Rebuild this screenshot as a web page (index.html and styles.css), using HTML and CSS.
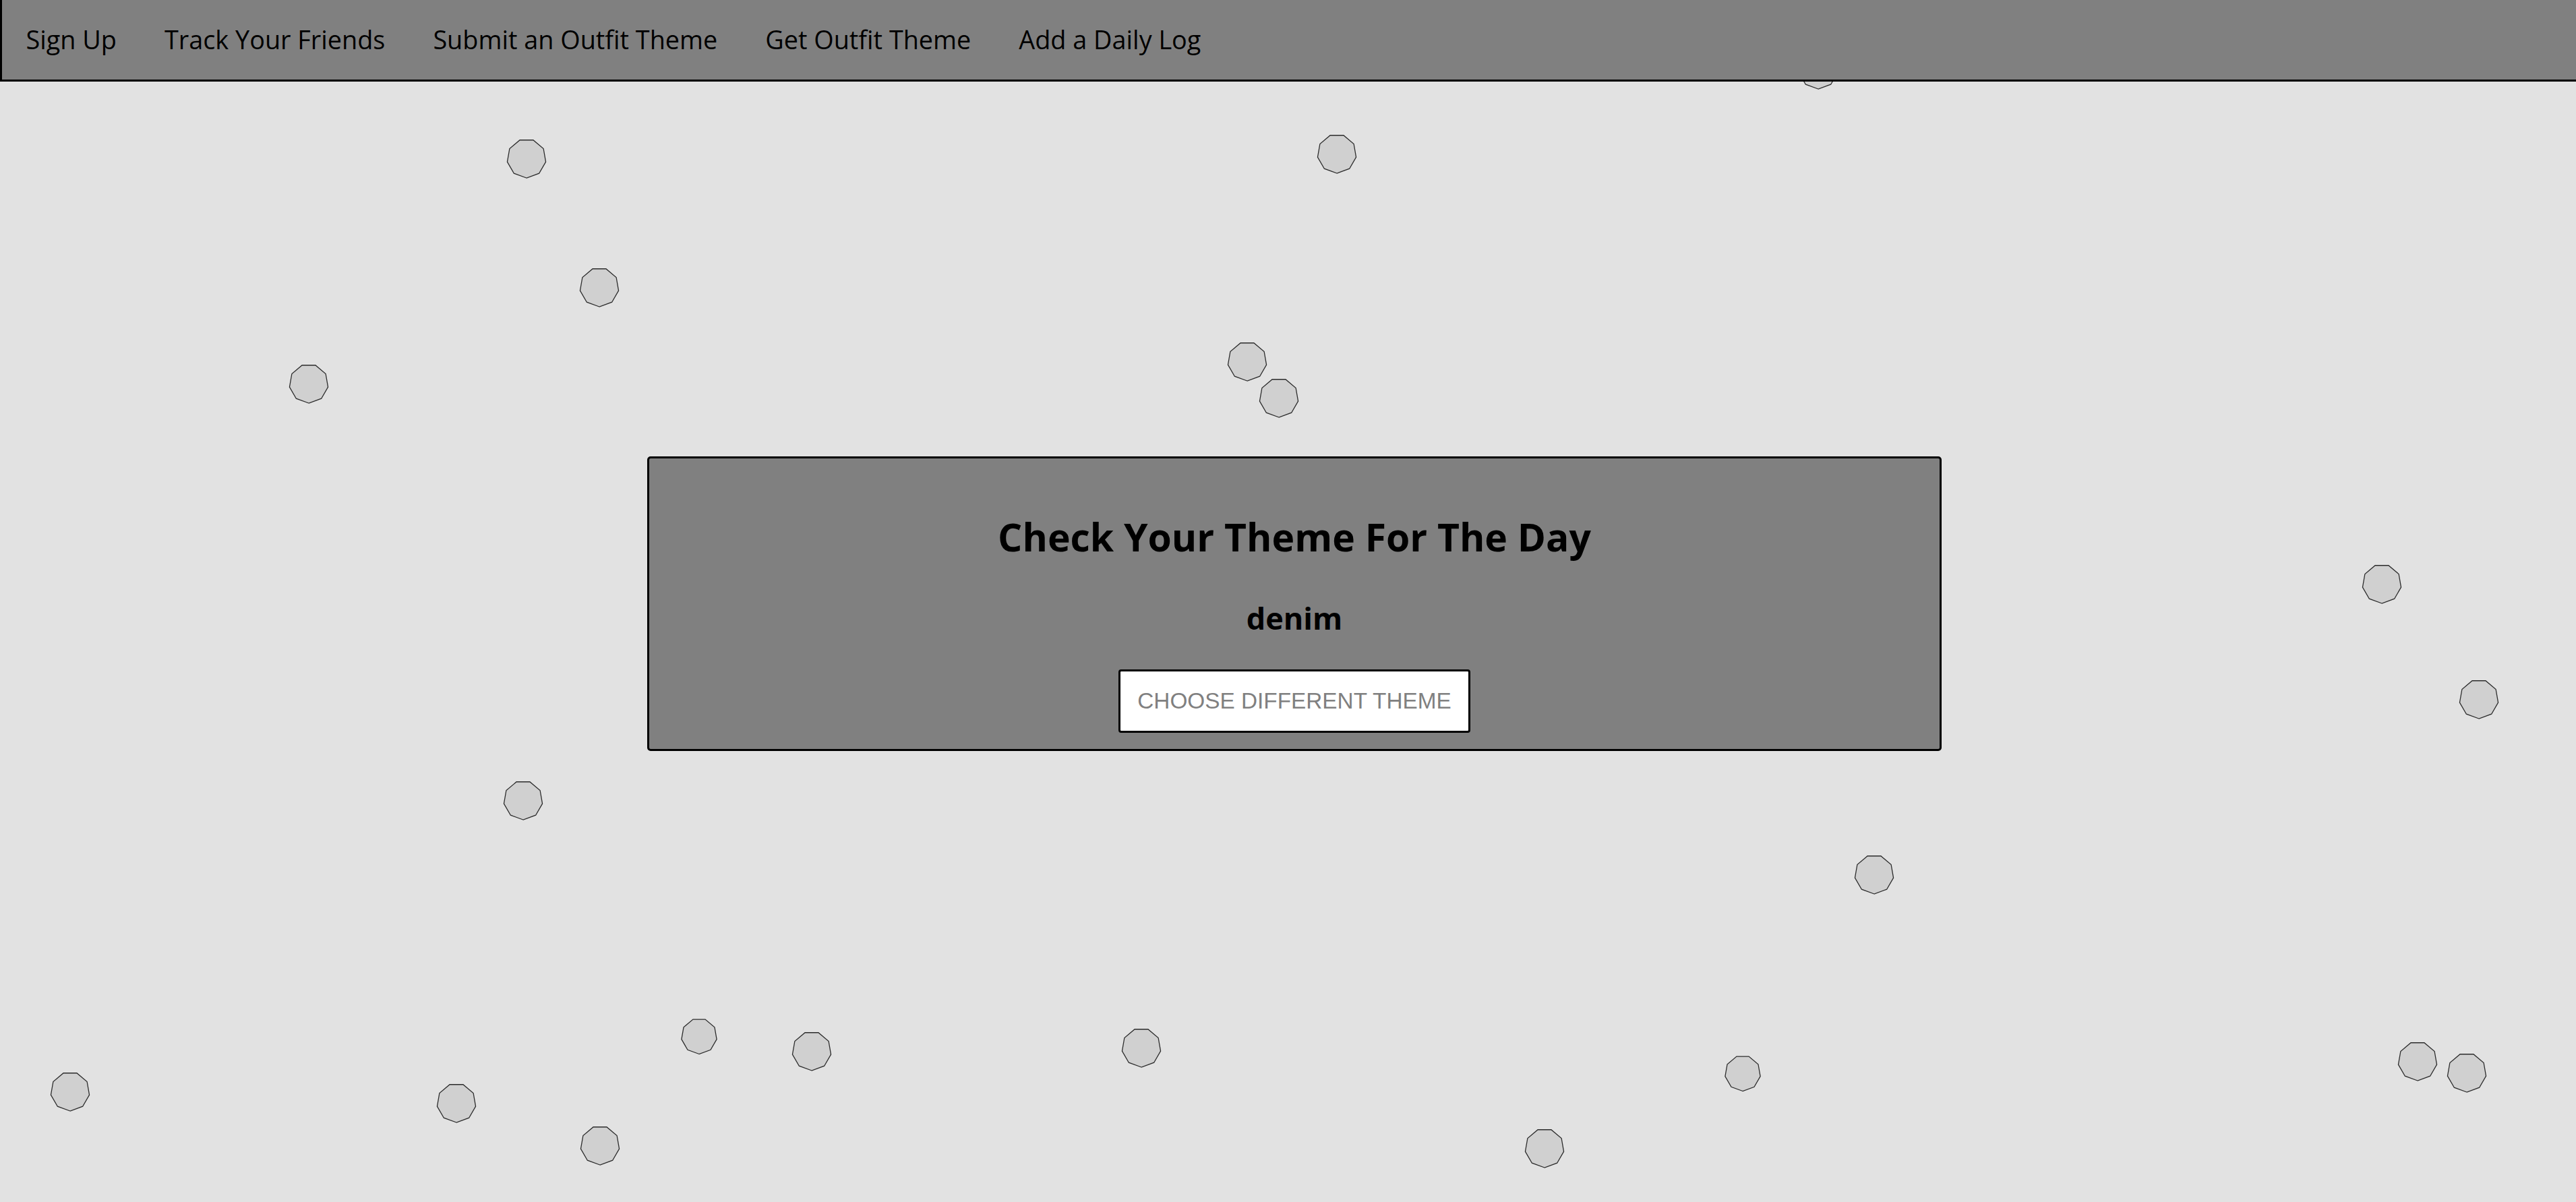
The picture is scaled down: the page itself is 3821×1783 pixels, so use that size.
FILE: index.html
```html
<!DOCTYPE html>
<html lang="en">
<head>
<meta charset="utf-8">
<title>Get Outfit Theme</title>
<link rel="stylesheet" href="styles.css">
</head>
<body>
<svg class="particles" width="3821" height="1783" viewBox="0 0 3821 1783" aria-hidden="true">
  <defs>
    <polygon id="pa" class="dot" points="0,29 -18.64,22.21 -28.56,5.03 -25.11,-14.5 -9.92,-27.25 9.92,-27.25 25.11,-14.5 28.56,5.03 18.64,22.21"/>
    <polygon id="pb" class="dot" points="0,26.5 -17.03,20.3 -26.1,4.6 -22.95,-13.25 -9.06,-24.9 9.06,-24.9 22.95,-13.25 26.1,4.6 17.03,20.3"/>
  </defs>
  <use href="#pa" x="781" y="235"/>
  <use href="#pa" x="1983" y="228"/>
  <use href="#pa" x="889" y="426"/>
  <use href="#pa" x="458" y="569"/>
  <use href="#pa" x="1850" y="536"/>
  <use href="#pa" x="1897" y="590"/>
  <use href="#pa" x="2697" y="103"/>
  <use href="#pa" x="3533" y="866"/>
  <use href="#pa" x="3677" y="1037"/>
  <use href="#pa" x="776" y="1187"/>
  <use href="#pa" x="2780" y="1297"/>
  <use href="#pb" x="1037" y="1537"/>
  <use href="#pa" x="1204" y="1559"/>
  <use href="#pa" x="1693" y="1554"/>
  <use href="#pa" x="104" y="1619"/>
  <use href="#pa" x="677" y="1636"/>
  <use href="#pa" x="890" y="1699"/>
  <use href="#pa" x="2291" y="1703"/>
  <use href="#pb" x="2585" y="1592"/>
  <use href="#pa" x="3586" y="1574"/>
  <use href="#pa" x="3659" y="1591"/>
</svg>

<nav class="nav">
  <a class="nav-link" href="#">Sign Up</a>
  <a class="nav-link" href="#">Track Your Friends</a>
  <a class="nav-link" href="#">Submit an Outfit Theme</a>
  <a class="nav-link" href="#">Get Outfit Theme</a>
  <a class="nav-link" href="#">Add a Daily Log</a>
</nav>

<main class="card">
  <h2 class="card-title">Check Your Theme For The Day</h2>
  <h3 class="card-theme">denim</h3>
  <button class="card-button" type="button">CHOOSE DIFFERENT THEME</button>
</main>
</body>
</html>
```

FILE: styles.css
```css
html, body {
  margin: 0;
  padding: 0;
}

body {
  background: #e2e2e2;
  height: 1783px;
  overflow: hidden;
  font-family: "Open Sans", "Noto Sans", sans-serif;
  color: #000;
}

.particles {
  position: fixed;
  left: 0;
  top: 0;
  z-index: 0;
}

.dot {
  fill: #d0d0d0;
  stroke: #2b2b2b;
  stroke-width: 1.3;
}

.nav {
  position: relative;
  z-index: 1;
  display: flex;
  height: 118px;
  background: #808080;
  border-left: 3px solid #000;
  border-bottom: 3px solid #000;
}

.nav-link {
  display: block;
  padding: 32px 35.5px 0;
  font-family: "Open Sans", sans-serif;
  font-size: 37.8px;
  line-height: 54px;
  color: #000;
  text-decoration: none;
  white-space: nowrap;
}

.card {
  position: relative;
  z-index: 1;
  box-sizing: border-box;
  width: 1920px;
  margin: 556px 0 0 960px;
  padding: 77px 0 24px;
  background: #808080;
  border: 3px solid #000;
  border-radius: 5px;
  display: flex;
  flex-direction: column;
  align-items: center;
}

.card-title {
  margin: 0 0 51px;
  font-family: "Open Sans", sans-serif;
  font-weight: 700;
  font-size: 57px;
  line-height: 78px;
  color: #000;
}

.card-theme {
  margin: 0 0 46px;
  font-family: "Open Sans", sans-serif;
  font-weight: 700;
  font-size: 45px;
  line-height: 61px;
  color: #000;
}

.card-button {
  font-family: "Liberation Sans", Arial, sans-serif;
  font-size: 33.33px;
  line-height: normal;
  color: #808080;
  background: #fff;
  border: 3px solid #000;
  border-radius: 4px;
  padding: 25px 25px;
  margin: 0;
  cursor: pointer;
}
```
